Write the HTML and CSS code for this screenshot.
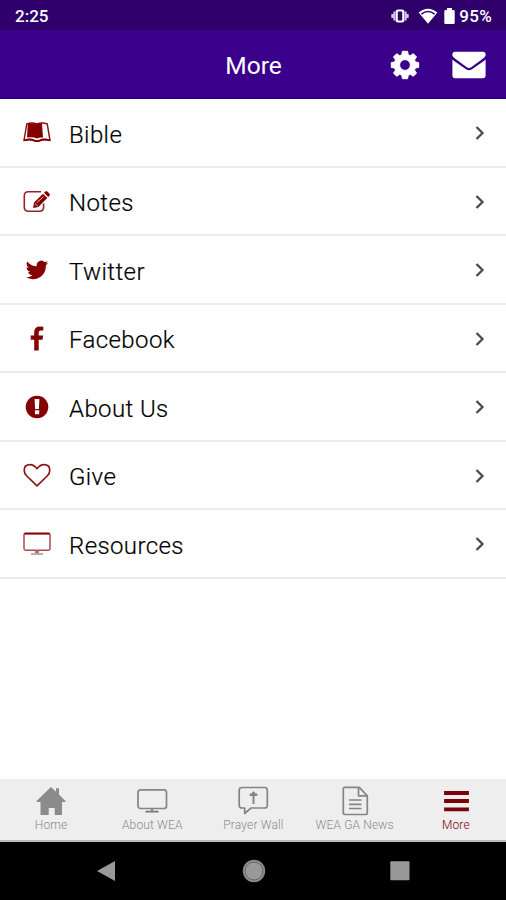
FILE: index.html
```html
<!DOCTYPE html>
<html lang="en">
<head>
<meta charset="utf-8">
<title>More</title>
<link rel="stylesheet" href="styles.css">
</head>
<body>
<div class="phone">
  <div class="status">
    <span class="time">2:25</span>
    <span class="indicators">
      <svg class="vibrate" width="18" height="16" viewBox="0 0 18 16"><rect x="5.700" y="2.500" width="6.600" height="11" rx="1" fill="none" stroke="#fff" stroke-width="2.200"/><path d="M3.400 3.500v9M14.600 3.500v9M1.300 6v4M16.700 6v4" stroke="#d8c9ee" stroke-width="2"/></svg>
      <svg class="wifi" width="20" height="16" viewBox="0 0 20 16"><path d="M.6 4.600Q10-3.200 19.400 4.600L10 15.800z" fill="#fff"/><path d="M3.400 6.100Q10 .9 16.600 6.100" fill="none" stroke="#2f006b" stroke-width="1.500"/></svg>
      <svg class="battery" width="11" height="16" viewBox="0 0 11 16"><path d="M3 0h5v2h1.500q1.200 0 1.200 1.200v11.600q0 1.200-1.200 1.200h-8Q.3 16 .3 14.800V3.200Q.3 2 1.500 2H3z" fill="#fff"/></svg>
      <span class="level">95%</span>
    </span>
  </div>
  <header class="header">
    <h1>More</h1>
    <div class="actions">
      <svg width="30" height="30" viewBox="0 0 30 30"><path fill="#fff" stroke="#fff" stroke-linejoin="round" fill-rule="evenodd" d="M12.400 1.300h5.200l.6 3.500 2.100.9 3-2 3.200 3.200-2 3 .9 2.100 3.300.6v4.800l-3.300.6-.9 2.100 2 3-3.200 3.200-3-2-2.100.9-.6 3.500h-5.200l-.6-3.500-2.100-.9-3 2-3.200-3.200 2-3-.9-2.100-3.300-.6v-4.800l3.300-.6.9-2.100-2-3 3.200-3.200 3 2 2.100-.9zM15 9.600a5.400 5.400 0 1 0 0 10.800a5.400 5.400 0 0 0 0-10.800z"/></svg>
      <svg width="34" height="28" viewBox="0 0 34 28"><path fill="#fff" d="M3 .7h28q2.600 0 2.600 2.600v1.500q-1 1.700-3.500 3.500L19.500 16q-2.500 1.800-5 0L4 8.300Q1.300 6.500.4 4.800V3.300Q.4.700 3 .7zM.4 8.500Q1 9.300 2.500 10.200L14 18.300q3 2 6 0l11.500-8.100q1.500-.9 2.100-1.700v15.800q0 2.900-2.800 2.900H3.200Q.4 27.200.4 24.300z"/></svg>
    </div>
  </header>
  <ul class="menu">
    <li><svg class="icon" viewBox="0 0 28 28"><path fill="none" stroke="#8b0d10" stroke-width="1.400" d="M3.800 4.800Q9 3 13.800 5Q19 3 24.200 4.800L27 21.300Q20 19.500 16.500 21.500Q14 22.500 11.500 21.500Q8 19.500 1 21.300z"/><path fill="#850003" d="M4.800 5Q9 3.700 13.800 5.300Q16.500 4.200 19 4.400L20 18.500Q16.500 18 14 19.500Q10 17.600 4 18.500z"/><path d="M1 21.300q6.500-1.800 10.300.3q2.700 1 5.400 0q3.800-2.100 10.300-.3" fill="none" stroke="#850003" stroke-width="1.900"/></svg><span>Bible</span><svg class="chevron" viewBox="0 0 10 16"><path d="M1.500 2l6 6-6 6"/></svg></li>
    <li><svg class="icon" viewBox="0 0 28 28"><path fill="none" stroke="#982326" stroke-width="1.600" d="M18 3.800H5.200Q1.300 3.800 1.300 7.700v11.600q0 3.900 3.900 3.900h11.500q3.900 0 3.900-3.900V15.500"/><path fill="#850003" d="M10.200 20l.8-5.500L20 5.700l4.300 4.300-8.900 9zM21 4.800l1.300-1.300q1-.9 2 0l2.200 2.200q1 1 0 2L25.200 9z"/><path d="M12 15.500l2.700 2.600M14 14.500l6.500-6" stroke="#fff" stroke-width=".8"/></svg><span>Notes</span><svg class="chevron" viewBox="0 0 10 16"><path d="M1.500 2l6 6-6 6"/></svg></li>
    <li><svg class="icon" viewBox="0 0 28 28"><path fill="#850003" transform="translate(2.700 2.500) scale(.94 .95)" d="M23.950 4.570a10 10 0 0 1-2.820.77 4.960 4.960 0 0 0 2.160-2.720c-.95.550-2 .95-3.130 1.180a4.920 4.920 0 0 0-8.380 4.480C7.690 8.090 4.070 6.130 1.640 3.160a4.820 4.820 0 0 0-.67 2.480c0 1.710.87 3.210 2.190 4.100a4.900 4.900 0 0 1-2.230-.62v.06a4.920 4.920 0 0 0 3.950 4.830 5 5 0 0 1-2.210.08 4.940 4.940 0 0 0 4.600 3.420A9.870 9.870 0 0 1 0 19.540a13.990 13.990 0 0 0 7.550 2.210c9.050 0 14-7.500 14-13.980 0-.21 0-.42-.02-.63a9.940 9.940 0 0 0 2.420-2.570z"/></svg><span>Twitter</span><svg class="chevron" viewBox="0 0 10 16"><path d="M1.500 2l6 6-6 6"/></svg></li>
    <li><svg class="icon" viewBox="0 0 28 28"><path fill="#850003" d="M20.300 1.700v3.900h-2.400q-2.200 0-2.200 2v2.900h4.400l-.6 4.200h-3.800v10.900h-4.500V14.700H7.700v-4.200h3.500V7.100q0-5.600 5.700-5.600 2.200 0 3.400.2z"/></svg><span>Facebook</span><svg class="chevron" viewBox="0 0 10 16"><path d="M1.500 2l6 6-6 6"/></svg></li>
    <li><svg class="icon" viewBox="0 0 28 28"><circle cx="14" cy="14" r="11.300" fill="#850003"/><path fill="#fff" d="M11.600 6h4.800l-.5 10h-3.800zM11.900 17.300h4.300v4h-4.300z"/></svg><span>About Us</span><svg class="chevron" viewBox="0 0 10 16"><path d="M1.500 2l6 6-6 6"/></svg></li>
    <li><svg class="icon" viewBox="0 0 28 28"><path fill="none" stroke="#8d1518" stroke-width="1.700" stroke-linejoin="round" d="M14 23.800L3.800 14Q1.200 11.500 1.200 8.300C1.200 4.500 3.600 2.700 7 2.700c3 0 5 1.500 7 4 2-2.500 4-4 7-4 3.400 0 5.800 1.800 5.800 5.600q0 3.200-2.600 5.700z"/></svg><span>Give</span><svg class="chevron" viewBox="0 0 10 16"><path d="M1.500 2l6 6-6 6"/></svg></li>
    <li><svg class="icon" viewBox="0 0 28 28"><rect x="1" y="3.300" width="26" height="16.900" rx="1.600" fill="none" stroke="#a94b4e" stroke-width="1.500"/><path d="M1.500 3.700h25" stroke="#850003" stroke-width="1.800"/><path d="M14 20.500v3" stroke="#a77" stroke-width="4"/><path d="M8 24h12" stroke="#b59a9a" stroke-width="1.700"/></svg><span>Resources</span><svg class="chevron" viewBox="0 0 10 16"><path d="M1.500 2l6 6-6 6"/></svg></li>
  </ul>
  <nav class="tabs">
    <div class="tab"><svg viewBox="0 0 32 32"><path fill="#8b8b8b" d="M16 2l5 4.800V3.300h3v6.300L30.500 16v1H27v13h-7.300v-7h-6v7H5.500V17H1.500v-1z"/></svg><span>Home</span></div>
    <div class="tab"><svg viewBox="0 0 32 32"><rect x="2" y="4.800" width="28.500" height="18.700" rx="2.500" fill="none" stroke="#858585" stroke-width="1.700"/><path d="M16 24v3M9.500 26.700h13" stroke="#777" stroke-width="1.700"/></svg><span>About WEA</span></div>
    <div class="tab"><svg viewBox="0 0 32 32"><path fill="none" stroke="#858585" stroke-width="1.700" stroke-linejoin="round" d="M5 2.500h22.500q2.800 0 2.800 2.800v14.900q0 2.800-2.800 2.800H14l-6.300 5.500V23H5q-2.800 0-2.800-2.800V5.300Q2.200 2.500 5 2.500z"/><path d="M16.500 7v12" stroke="#858585" stroke-width="2"/><path d="M16.500 6l2 2.600h1.800v2.400h-7.600V8.600h1.800z" fill="#858585"/></svg><span>Prayer Wall</span></div>
    <div class="tab"><svg viewBox="0 0 32 32"><path fill="none" stroke="#858585" stroke-width="1.700" stroke-linejoin="round" d="M5.800 2.300h14.500l8 8.500v17q0 1.700-1.700 1.700H5.800q-1.500 0-1.500-1.500V3.800q0-1.500 1.500-1.500zM19.500 2.500v8.300h8.500M10 15h12.500M10 19.300h12.500M10 23.500h12.500"/></svg><span>WEA GA News</span></div>
    <div class="tab active"><svg viewBox="0 0 32 32"><path d="M6 8h21M6 16h21M6 24.300h21" stroke="#7b0206" stroke-width="3.800" stroke-linecap="square"/></svg><span>More</span></div>
  </nav>
  <div class="system">
    <svg width="24" height="24" viewBox="0 0 24 24"><path d="M2 12L20 2v20z" fill="#999"/></svg>
    <svg width="24" height="24" viewBox="0 0 24 24"><circle cx="12" cy="12" r="10.500" fill="#999" stroke="#8c8c8c" stroke-width="1.400"/><circle cx="12" cy="12" r="9" fill="none" stroke="#555" stroke-width=".8"/></svg>
    <svg width="24" height="24" viewBox="0 0 24 24"><rect x="2.300" y="2.300" width="19.200" height="19" rx="1" fill="#999"/></svg>
  </div>
</div>
</body>
</html>
```
FILE: styles.css
```css
* { box-sizing: border-box; }
body { margin: 0; background: #fff; font-family: Roboto, "Liberation Sans", sans-serif; }
svg { display: block; flex: none; }
.phone { width: 506px; height: 900px; display: flex; flex-direction: column; overflow: hidden; }

.status { height: 30px; background: #2f006b; color: #fff; display: flex; justify-content: space-between; align-items: center; padding: 1px 14px 0 15px; font-size: 17px; font-weight: 500; }
.indicators { display: flex; align-items: center; }
.vibrate { margin-right: 9px; }
.wifi { margin-right: 6px; }
.battery { margin-right: 4px; }
.level { letter-spacing: .3px; }

.header { height: 69px; background: #3b008b; border-bottom: 1px solid #20006f; display: grid; grid-template-columns: 1fr auto 1fr; align-items: center; padding: 2px 20px 0; }
.header h1 { grid-column: 2; margin: 0; padding: 1px 0 0 1px; color: #fff; font-size: 24.5px; font-weight: 400; }
.actions { display: flex; align-items: center; justify-content: flex-end; gap: 32px; }

.menu { list-style: none; margin: 0; padding: 0; flex: 1; }
.menu li { height: 68.5px; border-bottom: 2px solid #ebebeb; display: flex; align-items: center; padding: 2px 21px 0 23px; font-size: 24px; color: #000; letter-spacing: .4px; }
.icon { width: 28px; height: 28px; margin-right: 18px; }
.menu span { flex: 1; padding-top: 3px; font-weight: 300; -webkit-text-stroke: .2px #000; }
.chevron { width: 10px; height: 16px; fill: none; stroke: #4b4b4b; stroke-width: 2.3; }

.tabs { height: 63px; background: #eee; border-bottom: 2px solid #bbb; display: grid; grid-template-columns: repeat(5, 1fr); }
.tab { display: flex; flex-direction: column; align-items: center; padding: 6px 0 0 1px; color: #8c8c8c; font-size: 12px; font-weight: 300; line-height: 16px; letter-spacing: .15px; white-space: nowrap; }
.tab svg { width: 32px; height: 32px; }
.tab.active { color: #7b0206; }

.system { height: 58px; background: #000; display: flex; align-items: center; justify-content: space-between; padding: 0 94px 0 95px; }
```
